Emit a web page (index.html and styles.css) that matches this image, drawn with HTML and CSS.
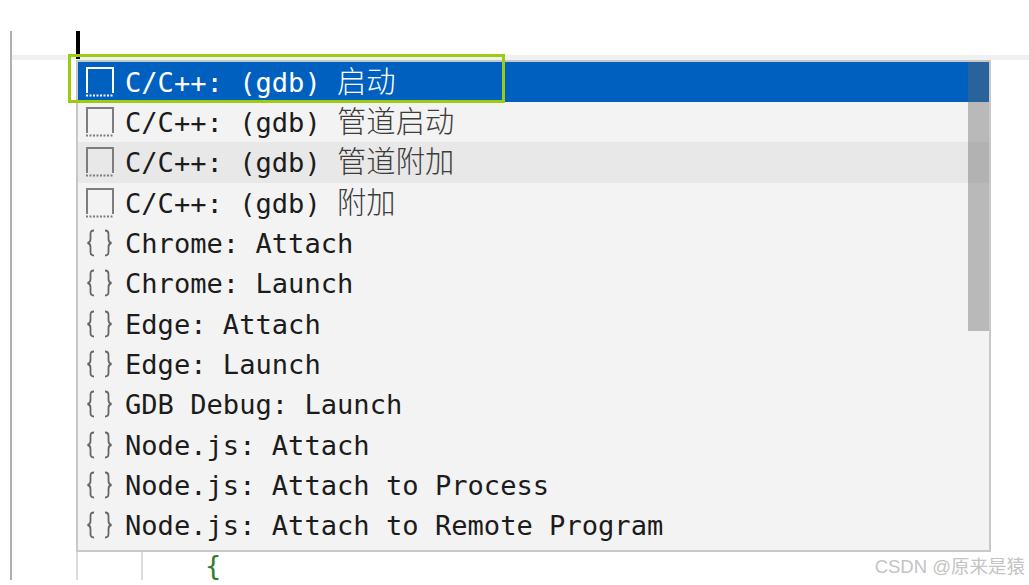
FILE: index.html
```html
<!DOCTYPE html>
<html lang="zh">
<head>
<meta charset="utf-8">
<title>Debug configurations</title>
<link rel="stylesheet" href="styles.css">
</head>
<body>
<svg class="defs" width="0" height="0" aria-hidden="true">
  <symbol id="snippet" viewBox="0 0 30 32">
    <path class="ic" d="M2 27V2H28V27"/>
    <path class="ic dots" d="M1 29.5H29"/>
  </symbol>
  <symbol id="braces" viewBox="0 0 30 32">
    <path class="ic thin" d="M9 3.5C6 3.5 5.5 5 5.5 7V12C5.5 14 5 15.5 2.5 16C5 16.5 5.5 18 5.5 20V25C5.5 27 6 28.5 9 28.5"/>
    <path class="ic thin" d="M20 3.5C23 3.5 23.500 5 23.500 7V12C23.500 14 24 15.500 26.500 16C24 16.500 23.500 18 23.500 20V25C23.500 27 23 28.500 20 28.500"/>
  </symbol>
</svg>
<main class="editor">
  <div class="line-highlight"></div>
  <div class="caret"></div>
  <div class="focus-box"></div>
  <section class="popup">
    <div class="thumb"></div>
    <ul class="list">
      <li class="row selected"><svg class="icon"><use href="#snippet"/></svg><span class="label">C/C++: (gdb) <span class="cjk">启动</span></span></li>
      <li class="row"><svg class="icon"><use href="#snippet"/></svg><span class="label">C/C++: (gdb) <span class="cjk">管道启动</span></span></li>
      <li class="row hovered"><svg class="icon"><use href="#snippet"/></svg><span class="label">C/C++: (gdb) <span class="cjk">管道附加</span></span></li>
      <li class="row"><svg class="icon"><use href="#snippet"/></svg><span class="label">C/C++: (gdb) <span class="cjk">附加</span></span></li>
      <li class="row"><svg class="icon"><use href="#braces"/></svg><span class="label">Chrome: Attach</span></li>
      <li class="row"><svg class="icon"><use href="#braces"/></svg><span class="label">Chrome: Launch</span></li>
      <li class="row"><svg class="icon"><use href="#braces"/></svg><span class="label">Edge: Attach</span></li>
      <li class="row"><svg class="icon"><use href="#braces"/></svg><span class="label">Edge: Launch</span></li>
      <li class="row"><svg class="icon"><use href="#braces"/></svg><span class="label">GDB Debug: Launch</span></li>
      <li class="row"><svg class="icon"><use href="#braces"/></svg><span class="label">Node.js: Attach</span></li>
      <li class="row"><svg class="icon"><use href="#braces"/></svg><span class="label">Node.js: Attach to Process</span></li>
      <li class="row"><svg class="icon"><use href="#braces"/></svg><span class="label">Node.js: Attach to Remote Program</span></li>
    </ul>
  </section>
  <div class="code-line">
    <span class="guide first"></span>
    <span class="guide second"></span>
    <span class="brace">{</span>
  </div>
  <div class="watermark">CSDN @原来是猿</div>
</main>
</body>
</html>
```
FILE: styles.css
```css
* { box-sizing: border-box; }
html, body { margin: 0; padding: 0; background: #fff; overflow: hidden; }
body { width: 1029px; height: 585px; }
.defs { position: absolute; }

.editor {
  position: relative;
  display: flex;
  flex-direction: column;
  margin: 31px 0 0 10px;
  height: 549px;
  border-left: 2px solid #b0b0b0;
}
.line-highlight {
  margin-top: 24px;
  height: 5px;
  background: #f0f0f0;
}
.caret {
  position: absolute;
  left: 64px;
  top: 0;
  width: 4px;
  height: 28px;
  background: #000;
  z-index: 1;
}
.focus-box {
  position: absolute;
  left: 56px;
  top: 23px;
  width: 437px;
  height: 49px;
  border: 3px solid #9ccb0f;
  z-index: 3;
}
.popup {
  position: absolute;
  left: 64px;
  top: 29px;
  width: 915px;
  height: 492px;
  background: #f3f3f3;
  border: 2px solid #c8c8c8;
  z-index: 2;
}
.thumb {
  position: absolute;
  right: 0;
  top: 0;
  width: 21px;
  height: 269px;
  background: rgba(102, 102, 102, 0.41);
}
.list {
  list-style: none;
  margin: 0;
  padding: 0;
}
.row {
  display: flex;
  align-items: center;
  gap: 10px;
  height: 40.3px;
  padding-left: 7px;
  color: #1c1c1c;
  font: 27.1px/40px "DejaVu Sans Mono", "Noto Sans CJK SC", monospace;
  white-space: pre;
}
.row.selected { background: #0060c0; color: #fff; height: 40px; }
.row.hovered { background: #e8e8e8; }
.icon {
  flex: none;
  width: 30px;
  height: 32px;
  color: #7d7d7d;
}
.selected .icon { color: #fff; }
.ic { fill: none; stroke: currentColor; stroke-width: 2; }
.ic.thin { stroke-width: 1.8; stroke: #666; }
.ic.dots { stroke-dasharray: 2 1.500; }
.label { padding-top: 2px; }
.cjk {
  font-family: "Noto Sans CJK SC", sans-serif;
  font-size: 29.3px;
  font-weight: 300;
  line-height: 0;
  color: #3c3c3c;
}
.selected .cjk { color: #fff; }

.code-line {
  position: relative;
  height: 28px;
  margin-top: 492px;
}
.guide {
  position: absolute;
  top: 0;
  bottom: 0;
  width: 2px;
  background: #dcdcdc;
}
.guide.first { left: 64px; }
.guide.second { left: 129px; }
.brace {
  position: absolute;
  left: 193px;
  top: -3px;
  color: #2e7d32;
  font: 27px/34px "DejaVu Sans Mono", monospace;
}
.watermark {
  position: absolute;
  right: 4px;
  top: 524px;
  color: #c4c4c4;
  font: 18.5px/24px "Liberation Sans", "Noto Sans CJK SC", sans-serif;
  z-index: 4;
}
```
